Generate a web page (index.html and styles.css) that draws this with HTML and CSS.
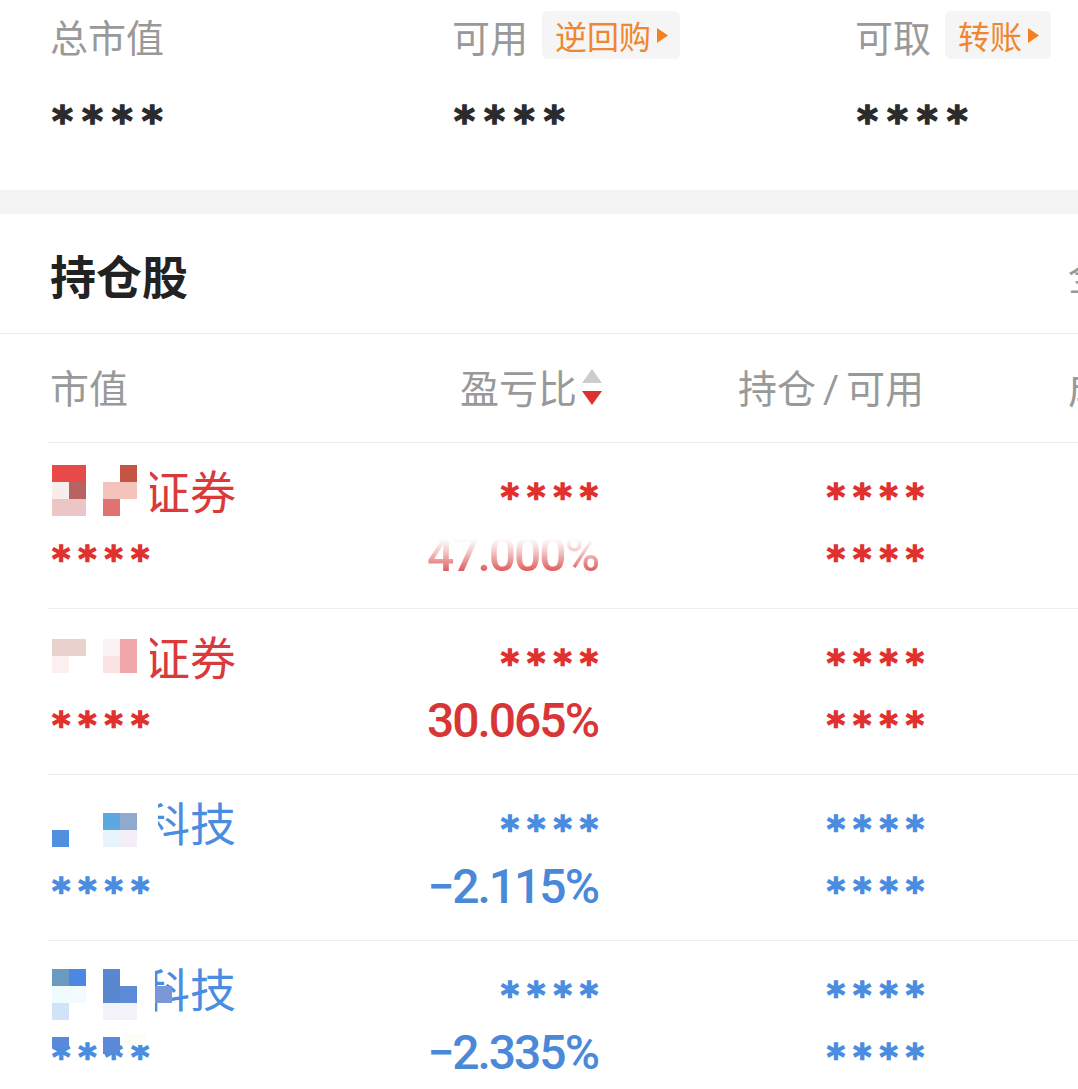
FILE: index.html
```html
<!DOCTYPE html>
<html lang="zh-CN">
  <head>
    <meta charset="UTF-8" />
    <meta name="viewport" content="width=device-width, initial-scale=1.0" />
    <title>持仓</title>
    <link rel="stylesheet" href="styles.css">
  </head>

  <body>
    <div class="page">
      <section class="assets">
        <div class="asset">
          <div class="asset-label">总市值</div>
          <div class="asset-value">****</div>
        </div>
        <div class="asset">
          <div class="asset-label">
            可用
            <span class="tag">逆回购<svg viewBox="0 0 11 15"><polygon points="0,0 11,7.5 0,15" /></svg></span>
          </div>
          <div class="asset-value">****</div>
        </div>
        <div class="asset">
          <div class="asset-label">
            可取
            <span class="tag">转账<svg viewBox="0 0 11 15"><polygon points="0,0 11,7.5 0,15" /></svg></span>
          </div>
          <div class="asset-value">****</div>
        </div>
      </section>

      <div class="band"></div>

      <section class="holdings">
        <div class="holdings-head">
          <h2>持仓股</h2>
          <span class="more">全部</span>
        </div>

        <div class="table">
          <div class="thead">
            <div class="c1">市值</div>
            <div class="c2">盈亏比<svg class="sort" viewBox="0 0 22 40"><polygon class="sort-up" points="1,16 21,16 11,2" /><polygon class="sort-down" points="1,24 21,24 11,38" /></svg></div>
            <div class="c3">持仓<span class="slash">/</span>可用</div>
            <div class="c4">成本/现价</div>
          </div>

          <!-- row 1 -->
          <div class="row up">
            <div class="name">
              <div class="line">
                <span class="name-text">证券</span>
                <svg class="mosaic" width="112" height="62" viewBox="0 0 112 62">
                  <rect x="0" y="0" width="102" height="62" fill="#fff" />
                  <rect x="4" y="3" width="34" height="17" fill="#e84a48" />
                  <rect x="72" y="3" width="17" height="17" fill="#c45544" />
                  <rect x="4" y="20" width="17" height="17" fill="#f8eded" />
                  <rect x="21" y="20" width="17" height="17" fill="#b86262" />
                  <rect x="55" y="20" width="34" height="17" fill="#f4c4bc" />
                  <rect x="4" y="37" width="34" height="17" fill="#ecc6c6" />
                  <rect x="55" y="37" width="17" height="17" fill="#e07272" />
                </svg>
              </div>
              <div class="line"><span class="stars">****</span></div>
            </div>
            <div class="c2">
              <div class="line"><span class="stars">****</span></div>
              <div class="line"><span class="pct blur">47.000%</span></div>
            </div>
            <div class="c3">
              <div class="line"><span class="stars">****</span></div>
              <div class="line"><span class="stars">****</span></div>
            </div>
          </div>

          <!-- row 2 -->
          <div class="row up">
            <div class="name">
              <div class="line">
                <span class="name-text">证券</span>
                <svg class="mosaic" width="112" height="62" viewBox="0 0 112 62">
                  <rect x="0" y="0" width="102" height="62" fill="#fff" />
                  <rect x="4" y="11" width="34" height="17" fill="#e9d2ce" />
                  <rect x="55" y="11" width="17" height="17" fill="#fbf3f3" />
                  <rect x="72" y="11" width="17" height="34" fill="#f0a6aa" />
                  <rect x="4" y="28" width="17" height="17" fill="#fcefef" />
                  <rect x="55" y="28" width="17" height="17" fill="#fbe3e3" />
                </svg>
              </div>
              <div class="line"><span class="stars">****</span></div>
            </div>
            <div class="c2">
              <div class="line"><span class="stars">****</span></div>
              <div class="line"><span class="pct">30.065%</span></div>
            </div>
            <div class="c3">
              <div class="line"><span class="stars">****</span></div>
              <div class="line"><span class="stars">****</span></div>
            </div>
          </div>

          <!-- row 3 -->
          <div class="row down">
            <div class="name">
              <div class="line">
                <span class="name-text">科技</span>
                <svg class="mosaic" width="112" height="62" viewBox="0 0 112 62">
                  <rect x="0" y="0" width="110" height="62" fill="#fff" />
                  <rect x="55" y="19" width="17" height="17" fill="#5ca8e2" />
                  <rect x="72" y="19" width="17" height="17" fill="#8faacd" />
                  <rect x="4" y="36" width="17" height="17" fill="#5090e0" />
                  <rect x="55" y="36" width="17" height="17" fill="#e8f4fc" />
                  <rect x="72" y="36" width="17" height="17" fill="#f3eef7" />
                </svg>
              </div>
              <div class="line"><span class="stars">****</span></div>
            </div>
            <div class="c2">
              <div class="line"><span class="stars">****</span></div>
              <div class="line"><span class="pct">−2.115%</span></div>
            </div>
            <div class="c3">
              <div class="line"><span class="stars">****</span></div>
              <div class="line"><span class="stars">****</span></div>
            </div>
          </div>

          <!-- row 4 -->
          <div class="row down">
            <div class="name">
              <div class="line">
                <span class="name-text">科技</span>
                <svg class="mosaic" width="126" height="62" viewBox="0 0 126 62">
                  <rect x="0" y="0" width="107" height="62" fill="#fff" />
                  <rect x="4" y="9" width="17" height="17" fill="#6a9ac0" />
                  <rect x="21" y="9" width="17" height="17" fill="#4a88e2" />
                  <rect x="55" y="9" width="17" height="34" fill="#5a88d0" />
                  <rect x="4" y="26" width="17" height="17" fill="#effbfd" />
                  <rect x="21" y="26" width="17" height="17" fill="#f3fbff" />
                  <rect x="72" y="26" width="17" height="17" fill="#5c8cd8" />
                  <rect x="107" y="26" width="17" height="17" fill="#7a98d8" />
                  <rect x="4" y="43" width="17" height="17" fill="#d2e2f8" />
                  <rect x="55" y="43" width="34" height="17" fill="#f3f2f8" />
                </svg>
              </div>
              <div class="line">
                <span class="stars">****</span>
                <svg class="mosaic" width="100" height="62" viewBox="0 0 100 62">
                  <rect x="4" y="15" width="17" height="11" fill="#5b89d9" />
                  <rect x="55" y="15" width="17" height="17" fill="#5b89d9" />
                  <rect x="76" y="12" width="22" height="11" fill="#fdfdf8" />
                </svg>
              </div>
            </div>
            <div class="c2">
              <div class="line"><span class="stars">****</span></div>
              <div class="line"><span class="pct">−2.335%</span></div>
            </div>
            <div class="c3">
              <div class="line"><span class="stars">****</span></div>
              <div class="line"><span class="stars">****</span></div>
            </div>
          </div>
        </div>
      </section>
    </div>
  </body>
</html>
```

FILE: styles.css
```css
* {
  box-sizing: border-box;
}
html,
body {
  margin: 0;
}
body {
  overflow: hidden;
  background: #fff;
  font-family: Roboto, "Noto Sans CJK SC", sans-serif;
  color: #333;
}
.page {
  width: 1200px;
}

/* top summary */
.assets {
  display: grid;
  grid-template-columns: 402px 403px 395px;
  height: 190px;
  padding: 10px 0 0 50px;
}
.asset-label {
  display: flex;
  align-items: center;
  gap: 14px;
  height: 50px;
  font-size: 38px;
  color: #999;
}
.tag {
  display: flex;
  align-items: center;
  gap: 6px;
  height: 48px;
  padding: 0 12px 0 13px;
  border-radius: 6px;
  background: #f5f5f5;
  color: #f0862f;
  font-size: 32px;
}
.tag svg {
  width: 11px;
  height: 15px;
  fill: #f5801f;
}
.asset-value {
  margin-top: 38px;
  padding-left: 2px;
  font-family: "DejaVu Sans", sans-serif;
  font-size: 40px;
  font-weight: 700;
  line-height: 46px;
  letter-spacing: 9px;
  color: #2b2b2b;
  -webkit-text-stroke: 1.4px #2b2b2b;
}

.band {
  height: 24px;
  background: #f4f4f4;
}

/* holdings */
.holdings-head {
  display: grid;
  grid-template-columns: 1018px auto;
  align-items: center;
  height: 120px;
  padding-left: 50px;
  border-bottom: 1px solid #ececec;
}
.holdings-head h2 {
  margin: 0;
  font-size: 46px;
  font-weight: 700;
  color: #222;
}
.more {
  font-size: 38px;
  color: #999;
  white-space: nowrap;
}

.table {
  margin-left: 48px;
}
.thead,
.row {
  display: grid;
  grid-template-columns: 300px 250px 326px 1fr;
}
.thead {
  height: 108px;
  padding-bottom: 4px;
  align-items: center;
  font-size: 39px;
  color: #999;
  white-space: nowrap;
}
.thead .c1 {
  padding-left: 2px;
}
.thead .c2 {
  margin-right: -5px;
  text-align: right;
}
.thead .c3 {
  text-align: right;
}
.slash {
  margin: 0 7px;
}
.thead .c4 {
  padding-left: 144px;
}
.sort {
  width: 22px;
  height: 40px;
  margin-left: 4px;
  vertical-align: -4px;
}
.sort-up {
  fill: #cccccc;
}
.sort-down {
  fill: #e0312f;
}

.row {
  padding: 19px 0 22px;
  border-top: 1px solid #ececec;
}
.up {
  color: #e0312f;
}
.down {
  color: #4a8de0;
}
.line {
  position: relative;
  height: 62px;
  line-height: 62px;
  white-space: nowrap;
}
.row .c2 .line,
.row .c3 .line {
  text-align: right;
}
.name-text {
  padding-left: 96px;
  font-size: 46px;
}
.up .name-text {
  color: #d93a3a;
}
.mosaic {
  position: absolute;
  left: 0;
  top: 0;
}
.stars {
  margin-right: -8px;
  padding-left: 4px;
  font-family: "DejaVu Sans", sans-serif;
  font-size: 35px;
  font-weight: 700;
  letter-spacing: 8px;
  vertical-align: -0.3em;
  -webkit-text-stroke: 1.3px currentColor;
}
.pct {
  font-size: 48px;
  font-weight: 500;
  letter-spacing: -2px;
}
.up .pct {
  color: #d83636;
}
.down .pct {
  color: #4a88d8;
}
.blur {
  background: linear-gradient(180deg, rgba(255, 255, 255, 0) 22%, #f3c9c9 45%, #d83232 92%);
  -webkit-background-clip: text;
  background-clip: text;
  color: transparent !important;
  -webkit-text-stroke: 0;
}
```
